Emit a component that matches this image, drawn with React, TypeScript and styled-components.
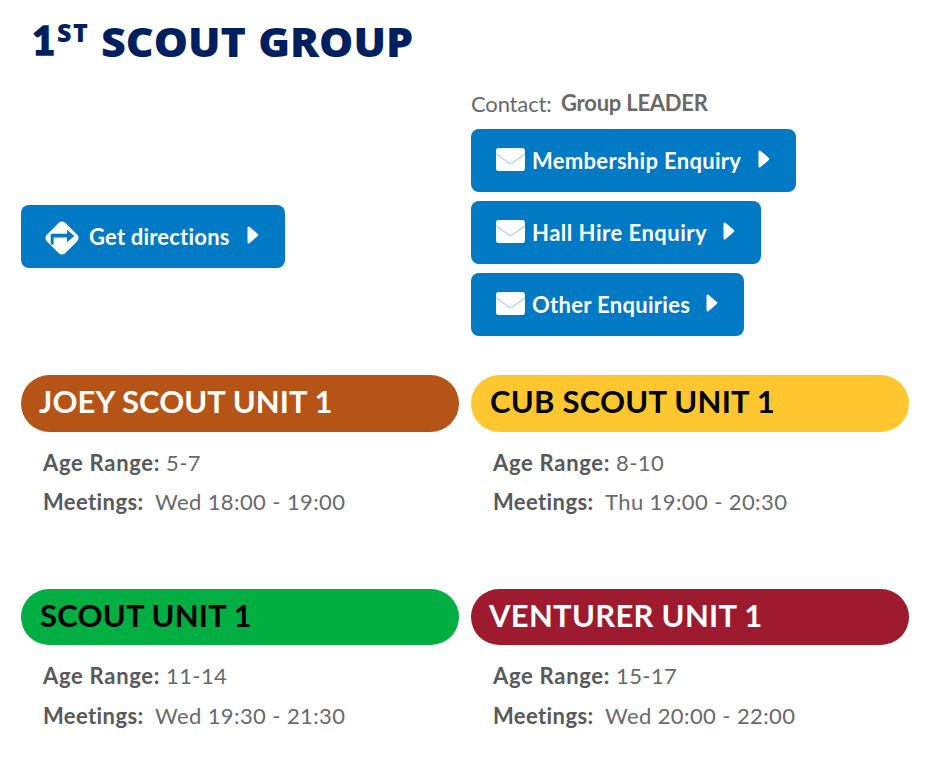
import React from "react";
import styled, { createGlobalStyle } from "styled-components";

const GlobalStyle = createGlobalStyle`
  * { box-sizing: border-box; }
  body {
    margin: 0;
    background: #fff;
    color: #68696c;
    font-family: Lato, "Open Sans", sans-serif;
    font-size: 22px;
    font-variant-ligatures: none;
  }
`;

const Page = styled.main`
  width: 940px;
  height: 761px;
  padding: 0 31px 0 21px;
  overflow: hidden;
`;

const Title = styled.h1`
  display: flex;
  align-items: flex-start;
  height: 93px;
  margin: 0;
  padding: 14px 0 0 11px;
  color: #001f5f;
  font: 800 40px/55px "Open Sans", sans-serif;
`;

const Numeral = styled.span`
  width: 25px;
  font-family: Lato, sans-serif;
  font-weight: 900;
  line-height: 53px;
  -webkit-text-stroke: 1.6px #001f5f;
`;

const Ordinal = styled.sup`
  width: 44px;
  font-size: 25px;
  font-weight: 800;
  line-height: 37px;
  letter-spacing: 1.6px;
  vertical-align: top;
`;

const GroupName = styled.span`
  word-spacing: 1px;
  white-space: nowrap;
  transform: scaleX(1.075);
  transform-origin: left;
`;

const Columns = styled.div`
  display: grid;
  grid-template-columns: 438px 438px;
  column-gap: 12px;
`;

const Column = styled.section<{ $top?: number }>`
  display: flex;
  flex-direction: column;
  align-items: flex-start;
  padding-top: ${(p) => p.$top ?? 0}px;
`;

const Contact = styled.p`
  display: flex;
  height: 35.5px;
  margin: 0;
  line-height: 24px;
`;

const ContactLabel = styled.span`
  width: 90px;
  margin-top: -1px;
  letter-spacing: -0.15px;
`;

const ContactName = styled.strong`
  margin-top: -2px;
  color: #6b6868;
  letter-spacing: -0.23px;
`;

const ActionButton = styled.button<{ $width: number; $height?: number }>`
  display: flex;
  align-items: center;
  width: ${(p) => p.$width}px;
  height: ${(p) => p.$height ?? 63}px;
  margin: 0 0 9px;
  padding: 0 26px 0 25px;
  border: 0;
  border-radius: 8px;
  background: #007ac5;
  color: #fff;
  font: inherit;
`;

const ActionLabel = styled.span<{ $gap: number; $spacing: number }>`
  margin-left: ${(p) => p.$gap}px;
  padding-top: 1px;
  font-weight: 700;
  line-height: 26px;
  letter-spacing: ${(p) => p.$spacing}px;
  white-space: nowrap;
`;

const ArrowIcon = styled.svg`
  flex: none;
  width: 12px;
  height: 18px;
  margin: 0 0 3px auto;
`;

const MailIcon = styled.svg`
  flex: none;
  width: 29px;
  height: 23px;
  margin-bottom: 2px;
`;

const RouteIcon = styled.svg`
  flex: none;
  width: 34px;
  height: 34px;
  margin: 3px 1px 0 -1px;
`;

const Units = styled.div`
  display: grid;
  grid-template-columns: 438px 438px;
  grid-template-rows: 214px 160px;
  column-gap: 12px;
  margin-top: 30px;
`;

const UnitName = styled.h2<{ $bg: string; $fg: string; $height: number; $spacing: number; $inset: number }>`
  height: ${(p) => p.$height}px;
  margin: 0;
  padding-left: ${(p) => p.$inset}px;
  border-radius: 28.5px;
  background: ${(p) => p.$bg};
  color: ${(p) => p.$fg};
  font-size: 31px;
  font-weight: 700;
  line-height: 53px;
  letter-spacing: ${(p) => p.$spacing}px;
`;

const Details = styled.dl<{ $top: number; $step: number }>`
  display: grid;
  grid-auto-rows: ${(p) => p.$step}px;
  margin: 0;
  padding: ${(p) => p.$top}px 0 0 22px;
  line-height: 26px;
`;

const Detail = styled.div`
  display: flex;
`;

const Term = styled.dt<{ $width: number; $spacing: number }>`
  width: ${(p) => p.$width}px;
  color: #58595b;
  font-weight: 700;
  letter-spacing: ${(p) => p.$spacing}px;
`;

const Value = styled.dd`
  margin: 0;
  letter-spacing: 0.4px;
`;

const Arrow = () => (
  <ArrowIcon viewBox="0 0 12 18">
    <path d="M.5 1.8C.5.4 2 .2 3 1.2l7.7 6.5c.8.7.8 1.5 0 2.2L3 16.8c-1 1-2.5.8-2.5-.6Z" fill="#fff" />
  </ArrowIcon>
);

const Mail = () => (
  <MailIcon viewBox="0 0 29 23">
    <rect width="29" height="23" rx="2.8" fill="#fff" />
    <path d="M0 5.8 12.5 14.7q2 1.4 4 0L29 5.8" fill="none" stroke="#a5d2ef" strokeWidth="1.1" />
  </MailIcon>
);

const Route = () => (
  <RouteIcon viewBox="0 0 34 34">
    <path d="M13.8 1.8q3.2-2.8 6.4 0l12 12q2.8 3.2 0 6.4l-12 12q-3.2 2.8-6.4 0l-12-12q-2.8-3.2 0-6.4Z" fill="#fff" />
    <path d="M5.7 23.6V14.4q0-1.7 1.7-1.7H22V8.8l7.3 6.2-7.3 6.2v-4.7H8.6v7.1Z" fill="#007ac5" />
  </RouteIcon>
);

const enquiries = [
  { label: "Membership Enquiry", width: 325, height: 64, spacing: 0.31 },
  { label: "Hall Hire Enquiry", width: 290, height: 63, spacing: 0.5 },
  { label: "Other Enquiries", width: 273, height: 63, spacing: 0.3 },
];

const units = [
  { name: "JOEY SCOUT UNIT 1", bg: "#b55416", fg: "#fff", age: "5-7", time: "Wed 18:00 - 19:00", spacing: 0.08, inset: 18 },
  { name: "CUB SCOUT UNIT 1", bg: "#ffc72f", fg: "#000", age: "8-10", time: "Thu 19:00 - 20:30", spacing: 0.25, inset: 19 },
  { name: "SCOUT UNIT 1", bg: "#00ae42", fg: "#000", age: "11-14", time: "Wed 19:30 - 21:30", spacing: 0.2, inset: 19 },
  { name: "VENTURER UNIT 1", bg: "#9d1a2f", fg: "#fff", age: "15-17", time: "Wed 20:00 - 22:00", spacing: 0.28, inset: 18 },
];

export default function App() {
  return (
    <Page>
      <GlobalStyle />
      <Title>
        <Numeral>1</Numeral>
        <Ordinal>ST</Ordinal>
        <GroupName>SCOUT GROUP</GroupName>
      </Title>
      <Columns>
        <Column $top={112}>
          <ActionButton $width={263.5}>
            <Route />
            <ActionLabel $gap={9} $spacing={0.2}>Get directions</ActionLabel>
            <Arrow />
          </ActionButton>
        </Column>
        <Column>
          <Contact>
            <ContactLabel>Contact:</ContactLabel>
            <ContactName>Group LEADER</ContactName>
          </Contact>
          {enquiries.map((e) => (
            <ActionButton key={e.label} $width={e.width} $height={e.height - 0.2}>
              <Mail />
              <ActionLabel $gap={7} $spacing={e.spacing}>{e.label}</ActionLabel>
              <Arrow />
            </ActionButton>
          ))}
        </Column>
      </Columns>
      <Units>
        {units.map((u, i) => (
          <section key={u.name}>
            <UnitName $bg={u.bg} $fg={u.fg} $height={i < 2 ? 57 : 56} $spacing={u.spacing} $inset={u.inset}>
              {u.name}
            </UnitName>
            <Details $top={18} $step={i < 2 ? 39 : 40}>
              <Detail>
                <Term $width={123} $spacing={0.7}>Age Range:</Term>
                <Value>{u.age}</Value>
              </Detail>
              <Detail>
                <Term $width={112} $spacing={0.4}>Meetings:</Term>
                <Value>{u.time}</Value>
              </Detail>
            </Details>
          </section>
        ))}
      </Units>
    </Page>
  );
}
